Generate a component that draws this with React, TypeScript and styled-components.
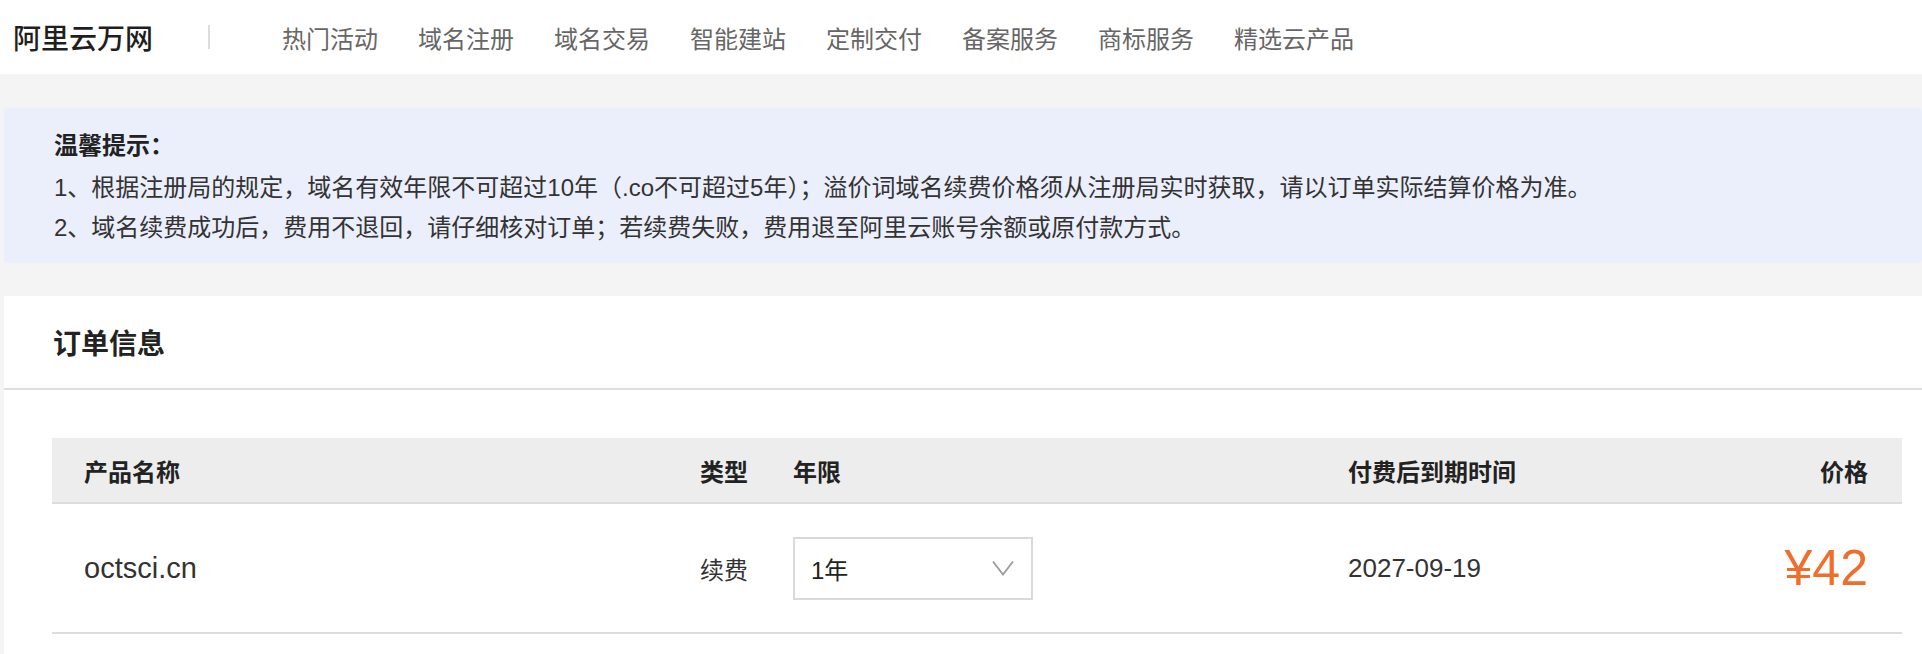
import styled, { createGlobalStyle } from "styled-components";

const GlobalStyle = createGlobalStyle`
  body {
    margin: 0;
    background: #f4f4f4;
    font-family: "Liberation Sans", "Noto Sans CJK SC", sans-serif;
    color: #333;
  }
`;

const Header = styled.header`
  display: flex;
  align-items: center;

  height: 74px;
  padding-left: 13px;

  background: #fff;
`;

const Logo = styled.div`
  font-size: 28px;
  font-weight: 500;
  color: #1f1f1f;
`;

const Divider = styled.span`
  width: 2px;
  height: 24px;
  margin-left: 55px;

  background: #dcdcdc;
`;

const Nav = styled.nav`
  display: flex;
  gap: 40px;

  margin-left: 72px;
`;

const NavLink = styled.a`
  font-size: 24px;
  color: #666;
  text-decoration: none;
`;

const Main = styled.main`
  padding: 34px 0 0 4px;
`;

const Notice = styled.section`
  padding: 18px 50px 15px;

  background: #ebeffc;
  border-radius: 4px;

  font-size: 24px;
  line-height: 40px;
`;

const NoticeTitle = styled.div`
  margin-bottom: 2px;

  font-weight: 600;
  color: #222;
`;

const Card = styled.section`
  margin-top: 33px;

  background: #fff;
`;

const CardTitle = styled.h2`
  display: flex;
  align-items: center;

  height: 92px;
  margin: 0;
  padding-left: 49px;

  border-bottom: 2px solid #dedede;

  font-size: 28px;
  font-weight: 600;
  color: #222;
`;

const TableWrap = styled.div`
  padding: 48px 20px 20px 48px;
`;

const Row = styled.div<{ $head?: boolean }>`
  display: grid;
  grid-template-columns: 616px 93px 555px 1fr 200px;
  align-items: center;

  height: ${(p) => (p.$head ? "64px" : "128px")};
  padding: 0 34px 0 32px;

  background: ${(p) => (p.$head ? "#ededed" : "#fff")};
  border-bottom: 2px solid #dcdcdc;

  font-size: 24px;
  font-weight: ${(p) => (p.$head ? 600 : 400)};
  color: ${(p) => (p.$head ? "#222" : "#333")};
`;

const Right = styled.div`
  text-align: right;
`;

const Domain = styled.div`
  font-size: 29px;
`;

const Date = styled.div`
  font-size: 26px;
`;

const Select = styled.div`
  display: flex;
  align-items: center;
  justify-content: space-between;
  box-sizing: border-box;

  width: 240px;
  height: 63px;
  padding: 0 17px 0 16px;

  border: 2px solid #d9d9d9;

  color: #222;
`;

const Price = styled.div`
  text-align: right;

  font-size: 50px;
  color: #ef6d2d;
`;

const navItems = [
  "热门活动",
  "域名注册",
  "域名交易",
  "智能建站",
  "定制交付",
  "备案服务",
  "商标服务",
  "精选云产品",
];

const Chevron = () => (
  <svg width="22" height="16" viewBox="0 0 22 16">
    <polyline
      points="1,1.5 11,14.5 21,1.5"
      fill="none"
      stroke="#9a9a9a"
      strokeWidth="1.8"
    />
  </svg>
);

export default function App() {
  return (
    <>
      <GlobalStyle />
      <Header>
        <Logo>阿里云万网</Logo>
        <Divider />
        <Nav>
          {navItems.map((item) => (
            <NavLink key={item} href="#">
              {item}
            </NavLink>
          ))}
        </Nav>
      </Header>

      <Main>
        <Notice>
          <NoticeTitle>温馨提示：</NoticeTitle>
          <div>
            1、根据注册局的规定，域名有效年限不可超过10年（.co不可超过5年）；溢价词域名续费价格须从注册局实时获取，请以订单实际结算价格为准。
          </div>
          <div>
            2、域名续费成功后，费用不退回，请仔细核对订单；若续费失败，费用退至阿里云账号余额或原付款方式。
          </div>
        </Notice>

        <Card>
          <CardTitle>订单信息</CardTitle>
          <TableWrap>
            <Row $head>
              <div>产品名称</div>
              <div>类型</div>
              <div>年限</div>
              <div>付费后到期时间</div>
              <Right>价格</Right>
            </Row>
            <Row>
              <Domain>octsci.cn</Domain>
              <div>续费</div>
              <div>
                <Select>
                  <span>1年</span>
                  <Chevron />
                </Select>
              </div>
              <Date>2027-09-19</Date>
              <Price>¥42</Price>
            </Row>
          </TableWrap>
        </Card>
      </Main>
    </>
  );
}
